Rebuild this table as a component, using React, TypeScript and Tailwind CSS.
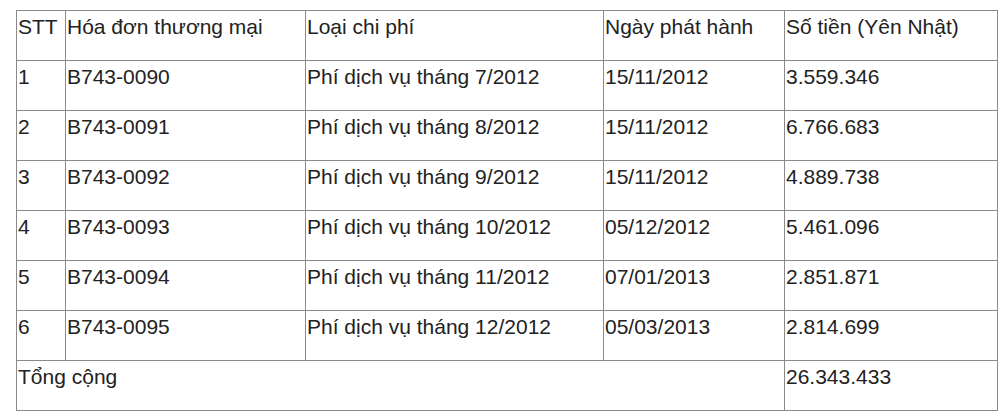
const rows = [
  ['1', 'B743-0090', 'Phí dịch vụ tháng 7/2012', '15/11/2012', '3.559.346'],
  ['2', 'B743-0091', 'Phí dịch vụ tháng 8/2012', '15/11/2012', '6.766.683'],
  ['3', 'B743-0092', 'Phí dịch vụ tháng 9/2012', '15/11/2012', '4.889.738'],
  ['4', 'B743-0093', 'Phí dịch vụ tháng 10/2012', '05/12/2012', '5.461.096'],
  ['5', 'B743-0094', 'Phí dịch vụ tháng 11/2012', '07/01/2013', '2.851.871'],
  ['6', 'B743-0095', 'Phí dịch vụ tháng 12/2012', '05/03/2013', '2.814.699'],
];

const cell = 'border border-[#8a8a8a] align-top pl-[1px] pt-[3px] h-[50px] font-normal text-left';

export default function App() {
  return (
    <div className="w-[1007px] h-[414px] overflow-hidden bg-white pt-[10px] pl-[16px]">
      <table
        className="table-fixed border-collapse w-[981px] text-[21px] text-[#222] leading-[25px]"
        style={{ fontFamily: '"Liberation Sans", Arial, sans-serif' }}
      >
        <colgroup>
          <col className="w-[49px]" />
          <col className="w-[240px]" />
          <col className="w-[298px]" />
          <col className="w-[181px]" />
          <col className="w-[213px]" />
        </colgroup>
        <thead>
          <tr>
            <th className={cell}>STT</th>
            <th className={cell}>Hóa đơn thương mại</th>
            <th className={cell}>Loại chi phí</th>
            <th className={cell}>Ngày phát hành</th>
            <th className={cell}>Số tiền (Yên Nhật)</th>
          </tr>
        </thead>
        <tbody>
          {rows.map((r) => (
            <tr key={r[0]}>
              {r.map((v, i) => (
                <td key={i} className={cell}>
                  {v}
                </td>
              ))}
            </tr>
          ))}
          <tr>
            <td colSpan={4} className={cell}>
              Tổng cộng
            </td>
            <td className={cell}>26.343.433</td>
          </tr>
        </tbody>
      </table>
    </div>
  );
}
